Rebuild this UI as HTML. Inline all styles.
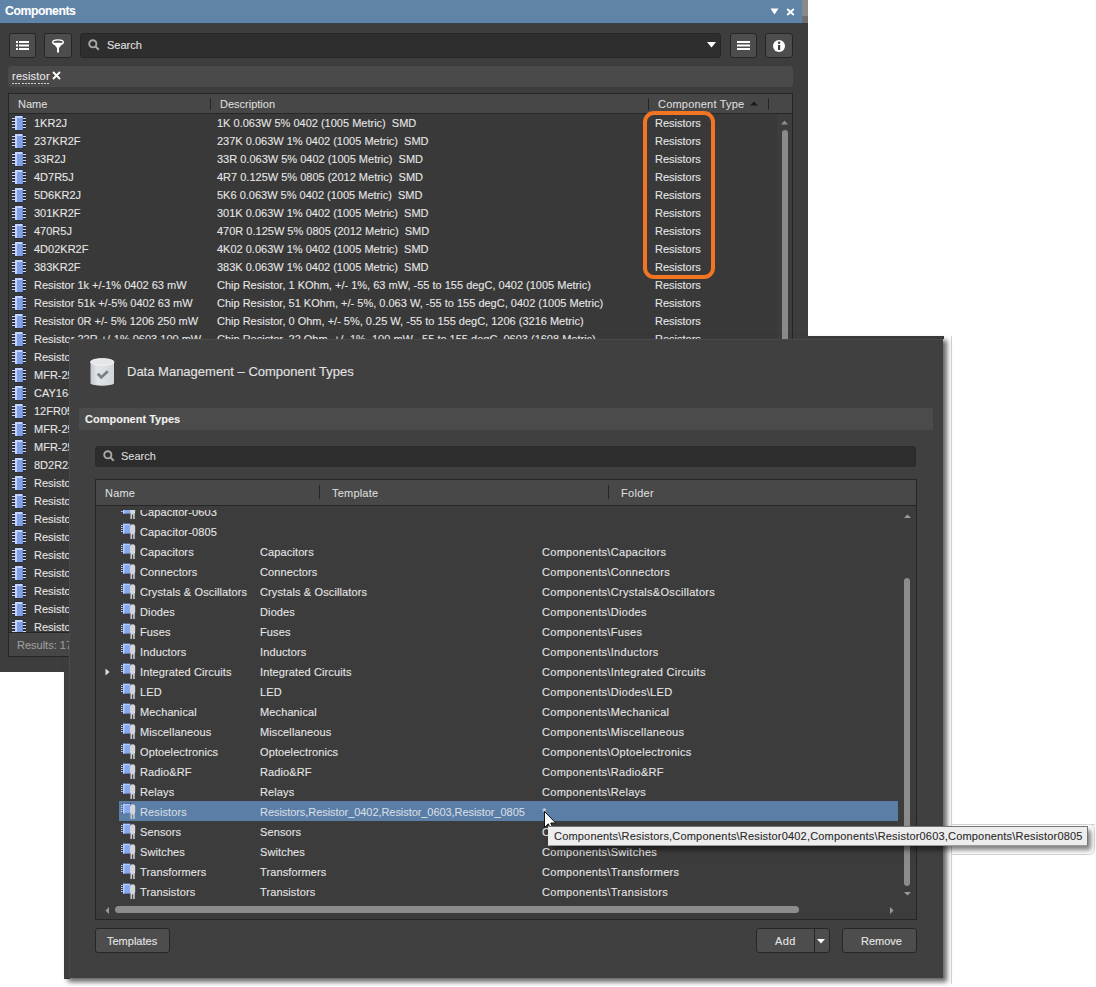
<!DOCTYPE html>
<html><head><meta charset="utf-8"><style>
*{box-sizing:border-box;margin:0;padding:0}
html,body{width:1096px;height:987px;overflow:hidden;background:#fff;position:relative;font-family:"Liberation Sans",sans-serif;color:#e8e8e8;font-size:11px}
.a{position:absolute}
.t{position:absolute;white-space:pre;line-height:14px;-webkit-text-stroke:0.1px currentColor}
.btn{position:absolute;background:#4d4d4d;border:1px solid #262626;border-radius:3px}
svg{position:absolute;overflow:visible}
.clip{position:absolute;overflow:hidden}
</style></head><body>
<div class="a" style="left:0px;top:0px;width:808px;height:672px;background:#3d3d3d;"></div>
<div class="a" style="left:0px;top:0px;width:802px;height:23px;background:#6084a8;"></div>
<div class="a" style="left:0px;top:23px;width:802px;height:1px;background:#39404a;"></div>
<div class="a" style="left:802px;top:0px;width:6px;height:16px;background:#8a8a8a;"></div>
<div class="a" style="left:802px;top:16px;width:6px;height:7px;background:#6f6f6f;"></div>
<div class="t" style="left:5px;top:3.77px;font-size:12.2px;color:#ffffff;font-weight:700;letter-spacing:-0.4px;">Components</div>
<svg style="left:770px;top:8px" width="9" height="7" viewBox="0 0 9 7"><path d="M0.5 0.5H8.5L4.5 6.5Z" fill="#fff"/></svg><svg style="left:786px;top:8px" width="9" height="8" viewBox="0 0 9 8"><path d="M1.2 1 L7.8 7 M7.8 1 L1.2 7" stroke="#fff" stroke-width="1.8"/></svg><div class="btn" style="left:9px;top:33px;width:27px;height:25px"></div><svg style="left:16px;top:41px" width="13" height="9" viewBox="0 0 13 9"><g fill="#fff"><rect x="0" y="0" width="2" height="2"/><rect x="3" y="0" width="10" height="2"/><rect x="0" y="3.5" width="2" height="2"/><rect x="3" y="3.5" width="10" height="2"/><rect x="0" y="7" width="2" height="2"/><rect x="3" y="7" width="10" height="2"/></g></svg><div class="btn" style="left:44px;top:33px;width:28px;height:25px"></div><svg style="left:51px;top:39px" width="14" height="14" viewBox="0 0 14 14"><ellipse cx="7" cy="3.2" rx="5.3" ry="2.3" fill="none" stroke="#fff" stroke-width="1.4"/><path d="M1.8 3.8 L6 9 L8 9 L12.2 3.8 Z" fill="#fff"/><rect x="6" y="8" width="2" height="5.5" fill="#fff"/></svg><div class="a" style="left:80px;top:33px;width:641px;height:25px;background:#2e2e2e;border:1px solid #262626;border-radius:3px"></div><svg style="left:88px;top:39px" width="12" height="12" viewBox="0 0 12 12"><circle cx="4.8" cy="4.8" r="3.6" fill="none" stroke="#a8a8a8" stroke-width="1.9"/><path d="M7.4 7.4 L10.8 10.8" stroke="#a8a8a8" stroke-width="2"/></svg><div class="t" style="left:107px;top:38.19px;font-size:11px;color:#e0e0e0;font-weight:400;letter-spacing:0px;">Search</div>
<svg style="left:707px;top:42px" width="9" height="6" viewBox="0 0 9 6"><path d="M0 0H9L4.5 5.5Z" fill="#fff"/></svg><div class="btn" style="left:730px;top:33px;width:27px;height:25px"></div><svg style="left:737px;top:41px" width="13" height="9" viewBox="0 0 13 9"><g fill="#fff"><rect x="0" y="0" width="13" height="2"/><rect x="0" y="3.5" width="13" height="2"/><rect x="0" y="7" width="13" height="2"/></g></svg><div class="btn" style="left:765px;top:33px;width:28px;height:25px"></div><svg style="left:772px;top:39px" width="14" height="14" viewBox="0 0 14 14"><circle cx="7" cy="7" r="6" fill="#fff"/><rect x="6" y="6" width="2.2" height="5" fill="#3d3d3d"/><circle cx="7.1" cy="3.8" r="1.2" fill="#3d3d3d"/></svg><div class="a" style="left:8px;top:66px;width:785px;height:21px;background:#4a4a4a;border-radius:4px"></div>
<div class="t" style="left:12px;top:69.19px;font-size:11px;color:#e8e8e8;font-weight:400;letter-spacing:0.22px;">resistor</div>
<div class="a" style="left:12px;top:83px;width:38px;height:1px;background:repeating-linear-gradient(to right,#d0d0d0 0,#d0d0d0 2px,transparent 2px,transparent 3.2px);"></div>
<svg style="left:52px;top:71px" width="9" height="9" viewBox="0 0 9 9"><path d="M1 1 L8 8 M8 1 L1 8" stroke="#fff" stroke-width="1.8"/></svg><div class="a" style="left:8px;top:93px;width:785px;height:564px;background:#393939;border:1px solid #262626"></div>
<div class="a" style="left:9px;top:94px;width:783px;height:19px;background:#474747;"></div>
<div class="a" style="left:9px;top:113px;width:783px;height:1px;background:#262626;"></div>
<div class="a" style="left:210px;top:98px;width:1px;height:12px;background:#262626;"></div>
<div class="a" style="left:648px;top:98px;width:1px;height:12px;background:#262626;"></div>
<div class="a" style="left:768px;top:98px;width:1px;height:12px;background:#262626;"></div>
<div class="t" style="left:18px;top:97.19px;font-size:11px;color:#dcdcdc;font-weight:400;letter-spacing:0px;">Name</div>
<div class="t" style="left:220px;top:97.19px;font-size:11px;color:#dcdcdc;font-weight:400;letter-spacing:0px;">Description</div>
<div class="t" style="left:658px;top:97.19px;font-size:11px;color:#dcdcdc;font-weight:400;letter-spacing:0.2px;">Component Type</div>
<svg style="left:750px;top:100.5px" width="8" height="5" viewBox="0 0 8 5"><path d="M0 4.5H8L4 0.5Z" fill="#1c1c1c"/></svg><div class="clip" style="left:9px;top:114px;width:770px;height:518px"><svg style="left:3px;top:2px" width="14" height="14" viewBox="0 0 14 14"><rect x="0.5" y="1" width="13" height="12" fill="#1d2640" opacity="0.55"/><rect x="2.5" y="-0.5" width="9" height="15" fill="#1d2a4a" opacity="0.8"/><g fill="#d6d9e2"><rect x="0" y="2" width="3" height="1"/><rect x="0" y="5" width="3" height="1"/><rect x="0" y="8" width="3" height="1"/><rect x="0" y="11" width="3" height="1"/><rect x="11" y="2" width="3" height="1"/><rect x="11" y="5" width="3" height="1"/><rect x="11" y="8" width="3" height="1"/><rect x="11" y="11" width="3" height="1"/></g><rect x="3" y="0" width="8" height="14" fill="#7f9fe6"/><rect x="3" y="0" width="2" height="14" fill="#c2d6ff"/><rect x="3" y="0" width="8" height="2" fill="#c2d6ff"/><rect x="10.3" y="0" width="0.7" height="14" fill="#6a88d0"/></svg><div class="t" style="left:25px;top:2.19px;font-size:11px;color:#e6e6e6;font-weight:400;letter-spacing:0px;">1KR2J</div>
<div class="t" style="left:208px;top:2.19px;font-size:11px;color:#e6e6e6;font-weight:400;letter-spacing:0px;">1K 0.063W 5% 0402 (1005 Metric)  SMD</div>
<div class="t" style="left:646px;top:2.19px;font-size:11px;color:#e6e6e6;font-weight:400;letter-spacing:0px;">Resistors</div>
<svg style="left:3px;top:20px" width="14" height="14" viewBox="0 0 14 14"><rect x="0.5" y="1" width="13" height="12" fill="#1d2640" opacity="0.55"/><rect x="2.5" y="-0.5" width="9" height="15" fill="#1d2a4a" opacity="0.8"/><g fill="#d6d9e2"><rect x="0" y="2" width="3" height="1"/><rect x="0" y="5" width="3" height="1"/><rect x="0" y="8" width="3" height="1"/><rect x="0" y="11" width="3" height="1"/><rect x="11" y="2" width="3" height="1"/><rect x="11" y="5" width="3" height="1"/><rect x="11" y="8" width="3" height="1"/><rect x="11" y="11" width="3" height="1"/></g><rect x="3" y="0" width="8" height="14" fill="#7f9fe6"/><rect x="3" y="0" width="2" height="14" fill="#c2d6ff"/><rect x="3" y="0" width="8" height="2" fill="#c2d6ff"/><rect x="10.3" y="0" width="0.7" height="14" fill="#6a88d0"/></svg><div class="t" style="left:25px;top:20.19px;font-size:11px;color:#e6e6e6;font-weight:400;letter-spacing:0px;">237KR2F</div>
<div class="t" style="left:208px;top:20.19px;font-size:11px;color:#e6e6e6;font-weight:400;letter-spacing:0px;">237K 0.063W 1% 0402 (1005 Metric)  SMD</div>
<div class="t" style="left:646px;top:20.19px;font-size:11px;color:#e6e6e6;font-weight:400;letter-spacing:0px;">Resistors</div>
<svg style="left:3px;top:38px" width="14" height="14" viewBox="0 0 14 14"><rect x="0.5" y="1" width="13" height="12" fill="#1d2640" opacity="0.55"/><rect x="2.5" y="-0.5" width="9" height="15" fill="#1d2a4a" opacity="0.8"/><g fill="#d6d9e2"><rect x="0" y="2" width="3" height="1"/><rect x="0" y="5" width="3" height="1"/><rect x="0" y="8" width="3" height="1"/><rect x="0" y="11" width="3" height="1"/><rect x="11" y="2" width="3" height="1"/><rect x="11" y="5" width="3" height="1"/><rect x="11" y="8" width="3" height="1"/><rect x="11" y="11" width="3" height="1"/></g><rect x="3" y="0" width="8" height="14" fill="#7f9fe6"/><rect x="3" y="0" width="2" height="14" fill="#c2d6ff"/><rect x="3" y="0" width="8" height="2" fill="#c2d6ff"/><rect x="10.3" y="0" width="0.7" height="14" fill="#6a88d0"/></svg><div class="t" style="left:25px;top:38.19px;font-size:11px;color:#e6e6e6;font-weight:400;letter-spacing:0px;">33R2J</div>
<div class="t" style="left:208px;top:38.19px;font-size:11px;color:#e6e6e6;font-weight:400;letter-spacing:0px;">33R 0.063W 5% 0402 (1005 Metric)  SMD</div>
<div class="t" style="left:646px;top:38.19px;font-size:11px;color:#e6e6e6;font-weight:400;letter-spacing:0px;">Resistors</div>
<svg style="left:3px;top:56px" width="14" height="14" viewBox="0 0 14 14"><rect x="0.5" y="1" width="13" height="12" fill="#1d2640" opacity="0.55"/><rect x="2.5" y="-0.5" width="9" height="15" fill="#1d2a4a" opacity="0.8"/><g fill="#d6d9e2"><rect x="0" y="2" width="3" height="1"/><rect x="0" y="5" width="3" height="1"/><rect x="0" y="8" width="3" height="1"/><rect x="0" y="11" width="3" height="1"/><rect x="11" y="2" width="3" height="1"/><rect x="11" y="5" width="3" height="1"/><rect x="11" y="8" width="3" height="1"/><rect x="11" y="11" width="3" height="1"/></g><rect x="3" y="0" width="8" height="14" fill="#7f9fe6"/><rect x="3" y="0" width="2" height="14" fill="#c2d6ff"/><rect x="3" y="0" width="8" height="2" fill="#c2d6ff"/><rect x="10.3" y="0" width="0.7" height="14" fill="#6a88d0"/></svg><div class="t" style="left:25px;top:56.19px;font-size:11px;color:#e6e6e6;font-weight:400;letter-spacing:0px;">4D7R5J</div>
<div class="t" style="left:208px;top:56.19px;font-size:11px;color:#e6e6e6;font-weight:400;letter-spacing:0px;">4R7 0.125W 5% 0805 (2012 Metric)  SMD</div>
<div class="t" style="left:646px;top:56.19px;font-size:11px;color:#e6e6e6;font-weight:400;letter-spacing:0px;">Resistors</div>
<svg style="left:3px;top:74px" width="14" height="14" viewBox="0 0 14 14"><rect x="0.5" y="1" width="13" height="12" fill="#1d2640" opacity="0.55"/><rect x="2.5" y="-0.5" width="9" height="15" fill="#1d2a4a" opacity="0.8"/><g fill="#d6d9e2"><rect x="0" y="2" width="3" height="1"/><rect x="0" y="5" width="3" height="1"/><rect x="0" y="8" width="3" height="1"/><rect x="0" y="11" width="3" height="1"/><rect x="11" y="2" width="3" height="1"/><rect x="11" y="5" width="3" height="1"/><rect x="11" y="8" width="3" height="1"/><rect x="11" y="11" width="3" height="1"/></g><rect x="3" y="0" width="8" height="14" fill="#7f9fe6"/><rect x="3" y="0" width="2" height="14" fill="#c2d6ff"/><rect x="3" y="0" width="8" height="2" fill="#c2d6ff"/><rect x="10.3" y="0" width="0.7" height="14" fill="#6a88d0"/></svg><div class="t" style="left:25px;top:74.19px;font-size:11px;color:#e6e6e6;font-weight:400;letter-spacing:0px;">5D6KR2J</div>
<div class="t" style="left:208px;top:74.19px;font-size:11px;color:#e6e6e6;font-weight:400;letter-spacing:0px;">5K6 0.063W 5% 0402 (1005 Metric)  SMD</div>
<div class="t" style="left:646px;top:74.19px;font-size:11px;color:#e6e6e6;font-weight:400;letter-spacing:0px;">Resistors</div>
<svg style="left:3px;top:92px" width="14" height="14" viewBox="0 0 14 14"><rect x="0.5" y="1" width="13" height="12" fill="#1d2640" opacity="0.55"/><rect x="2.5" y="-0.5" width="9" height="15" fill="#1d2a4a" opacity="0.8"/><g fill="#d6d9e2"><rect x="0" y="2" width="3" height="1"/><rect x="0" y="5" width="3" height="1"/><rect x="0" y="8" width="3" height="1"/><rect x="0" y="11" width="3" height="1"/><rect x="11" y="2" width="3" height="1"/><rect x="11" y="5" width="3" height="1"/><rect x="11" y="8" width="3" height="1"/><rect x="11" y="11" width="3" height="1"/></g><rect x="3" y="0" width="8" height="14" fill="#7f9fe6"/><rect x="3" y="0" width="2" height="14" fill="#c2d6ff"/><rect x="3" y="0" width="8" height="2" fill="#c2d6ff"/><rect x="10.3" y="0" width="0.7" height="14" fill="#6a88d0"/></svg><div class="t" style="left:25px;top:92.19px;font-size:11px;color:#e6e6e6;font-weight:400;letter-spacing:0px;">301KR2F</div>
<div class="t" style="left:208px;top:92.19px;font-size:11px;color:#e6e6e6;font-weight:400;letter-spacing:0px;">301K 0.063W 1% 0402 (1005 Metric)  SMD</div>
<div class="t" style="left:646px;top:92.19px;font-size:11px;color:#e6e6e6;font-weight:400;letter-spacing:0px;">Resistors</div>
<svg style="left:3px;top:110px" width="14" height="14" viewBox="0 0 14 14"><rect x="0.5" y="1" width="13" height="12" fill="#1d2640" opacity="0.55"/><rect x="2.5" y="-0.5" width="9" height="15" fill="#1d2a4a" opacity="0.8"/><g fill="#d6d9e2"><rect x="0" y="2" width="3" height="1"/><rect x="0" y="5" width="3" height="1"/><rect x="0" y="8" width="3" height="1"/><rect x="0" y="11" width="3" height="1"/><rect x="11" y="2" width="3" height="1"/><rect x="11" y="5" width="3" height="1"/><rect x="11" y="8" width="3" height="1"/><rect x="11" y="11" width="3" height="1"/></g><rect x="3" y="0" width="8" height="14" fill="#7f9fe6"/><rect x="3" y="0" width="2" height="14" fill="#c2d6ff"/><rect x="3" y="0" width="8" height="2" fill="#c2d6ff"/><rect x="10.3" y="0" width="0.7" height="14" fill="#6a88d0"/></svg><div class="t" style="left:25px;top:110.19px;font-size:11px;color:#e6e6e6;font-weight:400;letter-spacing:0px;">470R5J</div>
<div class="t" style="left:208px;top:110.19px;font-size:11px;color:#e6e6e6;font-weight:400;letter-spacing:0px;">470R 0.125W 5% 0805 (2012 Metric)  SMD</div>
<div class="t" style="left:646px;top:110.19px;font-size:11px;color:#e6e6e6;font-weight:400;letter-spacing:0px;">Resistors</div>
<svg style="left:3px;top:128px" width="14" height="14" viewBox="0 0 14 14"><rect x="0.5" y="1" width="13" height="12" fill="#1d2640" opacity="0.55"/><rect x="2.5" y="-0.5" width="9" height="15" fill="#1d2a4a" opacity="0.8"/><g fill="#d6d9e2"><rect x="0" y="2" width="3" height="1"/><rect x="0" y="5" width="3" height="1"/><rect x="0" y="8" width="3" height="1"/><rect x="0" y="11" width="3" height="1"/><rect x="11" y="2" width="3" height="1"/><rect x="11" y="5" width="3" height="1"/><rect x="11" y="8" width="3" height="1"/><rect x="11" y="11" width="3" height="1"/></g><rect x="3" y="0" width="8" height="14" fill="#7f9fe6"/><rect x="3" y="0" width="2" height="14" fill="#c2d6ff"/><rect x="3" y="0" width="8" height="2" fill="#c2d6ff"/><rect x="10.3" y="0" width="0.7" height="14" fill="#6a88d0"/></svg><div class="t" style="left:25px;top:128.19px;font-size:11px;color:#e6e6e6;font-weight:400;letter-spacing:0px;">4D02KR2F</div>
<div class="t" style="left:208px;top:128.19px;font-size:11px;color:#e6e6e6;font-weight:400;letter-spacing:0px;">4K02 0.063W 1% 0402 (1005 Metric)  SMD</div>
<div class="t" style="left:646px;top:128.19px;font-size:11px;color:#e6e6e6;font-weight:400;letter-spacing:0px;">Resistors</div>
<svg style="left:3px;top:146px" width="14" height="14" viewBox="0 0 14 14"><rect x="0.5" y="1" width="13" height="12" fill="#1d2640" opacity="0.55"/><rect x="2.5" y="-0.5" width="9" height="15" fill="#1d2a4a" opacity="0.8"/><g fill="#d6d9e2"><rect x="0" y="2" width="3" height="1"/><rect x="0" y="5" width="3" height="1"/><rect x="0" y="8" width="3" height="1"/><rect x="0" y="11" width="3" height="1"/><rect x="11" y="2" width="3" height="1"/><rect x="11" y="5" width="3" height="1"/><rect x="11" y="8" width="3" height="1"/><rect x="11" y="11" width="3" height="1"/></g><rect x="3" y="0" width="8" height="14" fill="#7f9fe6"/><rect x="3" y="0" width="2" height="14" fill="#c2d6ff"/><rect x="3" y="0" width="8" height="2" fill="#c2d6ff"/><rect x="10.3" y="0" width="0.7" height="14" fill="#6a88d0"/></svg><div class="t" style="left:25px;top:146.19px;font-size:11px;color:#e6e6e6;font-weight:400;letter-spacing:0px;">383KR2F</div>
<div class="t" style="left:208px;top:146.19px;font-size:11px;color:#e6e6e6;font-weight:400;letter-spacing:0px;">383K 0.063W 1% 0402 (1005 Metric)  SMD</div>
<div class="t" style="left:646px;top:146.19px;font-size:11px;color:#e6e6e6;font-weight:400;letter-spacing:0px;">Resistors</div>
<svg style="left:3px;top:164px" width="14" height="14" viewBox="0 0 14 14"><rect x="0.5" y="1" width="13" height="12" fill="#1d2640" opacity="0.55"/><rect x="2.5" y="-0.5" width="9" height="15" fill="#1d2a4a" opacity="0.8"/><g fill="#d6d9e2"><rect x="0" y="2" width="3" height="1"/><rect x="0" y="5" width="3" height="1"/><rect x="0" y="8" width="3" height="1"/><rect x="0" y="11" width="3" height="1"/><rect x="11" y="2" width="3" height="1"/><rect x="11" y="5" width="3" height="1"/><rect x="11" y="8" width="3" height="1"/><rect x="11" y="11" width="3" height="1"/></g><rect x="3" y="0" width="8" height="14" fill="#7f9fe6"/><rect x="3" y="0" width="2" height="14" fill="#c2d6ff"/><rect x="3" y="0" width="8" height="2" fill="#c2d6ff"/><rect x="10.3" y="0" width="0.7" height="14" fill="#6a88d0"/></svg><div class="t" style="left:25px;top:164.19px;font-size:11px;color:#e6e6e6;font-weight:400;letter-spacing:0px;">Resistor 1k +/-1% 0402 63 mW</div>
<div class="t" style="left:208px;top:164.19px;font-size:11px;color:#e6e6e6;font-weight:400;letter-spacing:0px;">Chip Resistor, 1 KOhm, +/- 1%, 63 mW, -55 to 155 degC, 0402 (1005 Metric)</div>
<div class="t" style="left:646px;top:164.19px;font-size:11px;color:#e6e6e6;font-weight:400;letter-spacing:0px;">Resistors</div>
<svg style="left:3px;top:182px" width="14" height="14" viewBox="0 0 14 14"><rect x="0.5" y="1" width="13" height="12" fill="#1d2640" opacity="0.55"/><rect x="2.5" y="-0.5" width="9" height="15" fill="#1d2a4a" opacity="0.8"/><g fill="#d6d9e2"><rect x="0" y="2" width="3" height="1"/><rect x="0" y="5" width="3" height="1"/><rect x="0" y="8" width="3" height="1"/><rect x="0" y="11" width="3" height="1"/><rect x="11" y="2" width="3" height="1"/><rect x="11" y="5" width="3" height="1"/><rect x="11" y="8" width="3" height="1"/><rect x="11" y="11" width="3" height="1"/></g><rect x="3" y="0" width="8" height="14" fill="#7f9fe6"/><rect x="3" y="0" width="2" height="14" fill="#c2d6ff"/><rect x="3" y="0" width="8" height="2" fill="#c2d6ff"/><rect x="10.3" y="0" width="0.7" height="14" fill="#6a88d0"/></svg><div class="t" style="left:25px;top:182.19px;font-size:11px;color:#e6e6e6;font-weight:400;letter-spacing:0px;">Resistor 51k +/-5% 0402 63 mW</div>
<div class="t" style="left:208px;top:182.19px;font-size:11px;color:#e6e6e6;font-weight:400;letter-spacing:0px;">Chip Resistor, 51 KOhm, +/- 5%, 0.063 W, -55 to 155 degC, 0402 (1005 Metric)</div>
<div class="t" style="left:646px;top:182.19px;font-size:11px;color:#e6e6e6;font-weight:400;letter-spacing:0px;">Resistors</div>
<svg style="left:3px;top:200px" width="14" height="14" viewBox="0 0 14 14"><rect x="0.5" y="1" width="13" height="12" fill="#1d2640" opacity="0.55"/><rect x="2.5" y="-0.5" width="9" height="15" fill="#1d2a4a" opacity="0.8"/><g fill="#d6d9e2"><rect x="0" y="2" width="3" height="1"/><rect x="0" y="5" width="3" height="1"/><rect x="0" y="8" width="3" height="1"/><rect x="0" y="11" width="3" height="1"/><rect x="11" y="2" width="3" height="1"/><rect x="11" y="5" width="3" height="1"/><rect x="11" y="8" width="3" height="1"/><rect x="11" y="11" width="3" height="1"/></g><rect x="3" y="0" width="8" height="14" fill="#7f9fe6"/><rect x="3" y="0" width="2" height="14" fill="#c2d6ff"/><rect x="3" y="0" width="8" height="2" fill="#c2d6ff"/><rect x="10.3" y="0" width="0.7" height="14" fill="#6a88d0"/></svg><div class="t" style="left:25px;top:200.19px;font-size:11px;color:#e6e6e6;font-weight:400;letter-spacing:0px;">Resistor 0R +/- 5% 1206 250 mW</div>
<div class="t" style="left:208px;top:200.19px;font-size:11px;color:#e6e6e6;font-weight:400;letter-spacing:0px;">Chip Resistor, 0 Ohm, +/- 5%, 0.25 W, -55 to 155 degC, 1206 (3216 Metric)</div>
<div class="t" style="left:646px;top:200.19px;font-size:11px;color:#e6e6e6;font-weight:400;letter-spacing:0px;">Resistors</div>
<svg style="left:3px;top:218px" width="14" height="14" viewBox="0 0 14 14"><rect x="0.5" y="1" width="13" height="12" fill="#1d2640" opacity="0.55"/><rect x="2.5" y="-0.5" width="9" height="15" fill="#1d2a4a" opacity="0.8"/><g fill="#d6d9e2"><rect x="0" y="2" width="3" height="1"/><rect x="0" y="5" width="3" height="1"/><rect x="0" y="8" width="3" height="1"/><rect x="0" y="11" width="3" height="1"/><rect x="11" y="2" width="3" height="1"/><rect x="11" y="5" width="3" height="1"/><rect x="11" y="8" width="3" height="1"/><rect x="11" y="11" width="3" height="1"/></g><rect x="3" y="0" width="8" height="14" fill="#7f9fe6"/><rect x="3" y="0" width="2" height="14" fill="#c2d6ff"/><rect x="3" y="0" width="8" height="2" fill="#c2d6ff"/><rect x="10.3" y="0" width="0.7" height="14" fill="#6a88d0"/></svg><div class="t" style="left:25px;top:218.19px;font-size:11px;color:#e6e6e6;font-weight:400;letter-spacing:0px;">Resistor 22R +/-1% 0603 100 mW</div>
<div class="t" style="left:208px;top:218.19px;font-size:11px;color:#e6e6e6;font-weight:400;letter-spacing:0px;">Chip Resistor, 22 Ohm, +/- 1%, 100 mW, -55 to 155 degC, 0603 (1608 Metric)</div>
<div class="t" style="left:646px;top:218.19px;font-size:11px;color:#e6e6e6;font-weight:400;letter-spacing:0px;">Resistors</div>
<svg style="left:3px;top:236px" width="14" height="14" viewBox="0 0 14 14"><rect x="0.5" y="1" width="13" height="12" fill="#1d2640" opacity="0.55"/><rect x="2.5" y="-0.5" width="9" height="15" fill="#1d2a4a" opacity="0.8"/><g fill="#d6d9e2"><rect x="0" y="2" width="3" height="1"/><rect x="0" y="5" width="3" height="1"/><rect x="0" y="8" width="3" height="1"/><rect x="0" y="11" width="3" height="1"/><rect x="11" y="2" width="3" height="1"/><rect x="11" y="5" width="3" height="1"/><rect x="11" y="8" width="3" height="1"/><rect x="11" y="11" width="3" height="1"/></g><rect x="3" y="0" width="8" height="14" fill="#7f9fe6"/><rect x="3" y="0" width="2" height="14" fill="#c2d6ff"/><rect x="3" y="0" width="8" height="2" fill="#c2d6ff"/><rect x="10.3" y="0" width="0.7" height="14" fill="#6a88d0"/></svg><div class="t" style="left:25px;top:236.19px;font-size:11px;color:#e6e6e6;font-weight:400;letter-spacing:0px;">Resistor</div>
<div class="t" style="left:208px;top:236.19px;font-size:11px;color:#e6e6e6;font-weight:400;letter-spacing:0px;">Chip Resistor</div>
<div class="t" style="left:646px;top:236.19px;font-size:11px;color:#e6e6e6;font-weight:400;letter-spacing:0px;">Resistors</div>
<svg style="left:3px;top:254px" width="14" height="14" viewBox="0 0 14 14"><rect x="0.5" y="1" width="13" height="12" fill="#1d2640" opacity="0.55"/><rect x="2.5" y="-0.5" width="9" height="15" fill="#1d2a4a" opacity="0.8"/><g fill="#d6d9e2"><rect x="0" y="2" width="3" height="1"/><rect x="0" y="5" width="3" height="1"/><rect x="0" y="8" width="3" height="1"/><rect x="0" y="11" width="3" height="1"/><rect x="11" y="2" width="3" height="1"/><rect x="11" y="5" width="3" height="1"/><rect x="11" y="8" width="3" height="1"/><rect x="11" y="11" width="3" height="1"/></g><rect x="3" y="0" width="8" height="14" fill="#7f9fe6"/><rect x="3" y="0" width="2" height="14" fill="#c2d6ff"/><rect x="3" y="0" width="8" height="2" fill="#c2d6ff"/><rect x="10.3" y="0" width="0.7" height="14" fill="#6a88d0"/></svg><div class="t" style="left:25px;top:254.19px;font-size:11px;color:#e6e6e6;font-weight:400;letter-spacing:0px;">MFR-25FBF52</div>
<div class="t" style="left:208px;top:254.19px;font-size:11px;color:#e6e6e6;font-weight:400;letter-spacing:0px;">Resistor</div>
<div class="t" style="left:646px;top:254.19px;font-size:11px;color:#e6e6e6;font-weight:400;letter-spacing:0px;">Resistors</div>
<svg style="left:3px;top:272px" width="14" height="14" viewBox="0 0 14 14"><rect x="0.5" y="1" width="13" height="12" fill="#1d2640" opacity="0.55"/><rect x="2.5" y="-0.5" width="9" height="15" fill="#1d2a4a" opacity="0.8"/><g fill="#d6d9e2"><rect x="0" y="2" width="3" height="1"/><rect x="0" y="5" width="3" height="1"/><rect x="0" y="8" width="3" height="1"/><rect x="0" y="11" width="3" height="1"/><rect x="11" y="2" width="3" height="1"/><rect x="11" y="5" width="3" height="1"/><rect x="11" y="8" width="3" height="1"/><rect x="11" y="11" width="3" height="1"/></g><rect x="3" y="0" width="8" height="14" fill="#7f9fe6"/><rect x="3" y="0" width="2" height="14" fill="#c2d6ff"/><rect x="3" y="0" width="8" height="2" fill="#c2d6ff"/><rect x="10.3" y="0" width="0.7" height="14" fill="#6a88d0"/></svg><div class="t" style="left:25px;top:272.19px;font-size:11px;color:#e6e6e6;font-weight:400;letter-spacing:0px;">CAY16-103J4LF</div>
<div class="t" style="left:208px;top:272.19px;font-size:11px;color:#e6e6e6;font-weight:400;letter-spacing:0px;">Resistor</div>
<div class="t" style="left:646px;top:272.19px;font-size:11px;color:#e6e6e6;font-weight:400;letter-spacing:0px;">Resistors</div>
<svg style="left:3px;top:290px" width="14" height="14" viewBox="0 0 14 14"><rect x="0.5" y="1" width="13" height="12" fill="#1d2640" opacity="0.55"/><rect x="2.5" y="-0.5" width="9" height="15" fill="#1d2a4a" opacity="0.8"/><g fill="#d6d9e2"><rect x="0" y="2" width="3" height="1"/><rect x="0" y="5" width="3" height="1"/><rect x="0" y="8" width="3" height="1"/><rect x="0" y="11" width="3" height="1"/><rect x="11" y="2" width="3" height="1"/><rect x="11" y="5" width="3" height="1"/><rect x="11" y="8" width="3" height="1"/><rect x="11" y="11" width="3" height="1"/></g><rect x="3" y="0" width="8" height="14" fill="#7f9fe6"/><rect x="3" y="0" width="2" height="14" fill="#c2d6ff"/><rect x="3" y="0" width="8" height="2" fill="#c2d6ff"/><rect x="10.3" y="0" width="0.7" height="14" fill="#6a88d0"/></svg><div class="t" style="left:25px;top:290.19px;font-size:11px;color:#e6e6e6;font-weight:400;letter-spacing:0px;">12FR050E</div>
<div class="t" style="left:208px;top:290.19px;font-size:11px;color:#e6e6e6;font-weight:400;letter-spacing:0px;">Resistor</div>
<div class="t" style="left:646px;top:290.19px;font-size:11px;color:#e6e6e6;font-weight:400;letter-spacing:0px;">Resistors</div>
<svg style="left:3px;top:308px" width="14" height="14" viewBox="0 0 14 14"><rect x="0.5" y="1" width="13" height="12" fill="#1d2640" opacity="0.55"/><rect x="2.5" y="-0.5" width="9" height="15" fill="#1d2a4a" opacity="0.8"/><g fill="#d6d9e2"><rect x="0" y="2" width="3" height="1"/><rect x="0" y="5" width="3" height="1"/><rect x="0" y="8" width="3" height="1"/><rect x="0" y="11" width="3" height="1"/><rect x="11" y="2" width="3" height="1"/><rect x="11" y="5" width="3" height="1"/><rect x="11" y="8" width="3" height="1"/><rect x="11" y="11" width="3" height="1"/></g><rect x="3" y="0" width="8" height="14" fill="#7f9fe6"/><rect x="3" y="0" width="2" height="14" fill="#c2d6ff"/><rect x="3" y="0" width="8" height="2" fill="#c2d6ff"/><rect x="10.3" y="0" width="0.7" height="14" fill="#6a88d0"/></svg><div class="t" style="left:25px;top:308.19px;font-size:11px;color:#e6e6e6;font-weight:400;letter-spacing:0px;">MFR-25FBF52</div>
<div class="t" style="left:208px;top:308.19px;font-size:11px;color:#e6e6e6;font-weight:400;letter-spacing:0px;">Resistor</div>
<div class="t" style="left:646px;top:308.19px;font-size:11px;color:#e6e6e6;font-weight:400;letter-spacing:0px;">Resistors</div>
<svg style="left:3px;top:326px" width="14" height="14" viewBox="0 0 14 14"><rect x="0.5" y="1" width="13" height="12" fill="#1d2640" opacity="0.55"/><rect x="2.5" y="-0.5" width="9" height="15" fill="#1d2a4a" opacity="0.8"/><g fill="#d6d9e2"><rect x="0" y="2" width="3" height="1"/><rect x="0" y="5" width="3" height="1"/><rect x="0" y="8" width="3" height="1"/><rect x="0" y="11" width="3" height="1"/><rect x="11" y="2" width="3" height="1"/><rect x="11" y="5" width="3" height="1"/><rect x="11" y="8" width="3" height="1"/><rect x="11" y="11" width="3" height="1"/></g><rect x="3" y="0" width="8" height="14" fill="#7f9fe6"/><rect x="3" y="0" width="2" height="14" fill="#c2d6ff"/><rect x="3" y="0" width="8" height="2" fill="#c2d6ff"/><rect x="10.3" y="0" width="0.7" height="14" fill="#6a88d0"/></svg><div class="t" style="left:25px;top:326.19px;font-size:11px;color:#e6e6e6;font-weight:400;letter-spacing:0px;">MFR-25FBF52</div>
<div class="t" style="left:208px;top:326.19px;font-size:11px;color:#e6e6e6;font-weight:400;letter-spacing:0px;">Resistor</div>
<div class="t" style="left:646px;top:326.19px;font-size:11px;color:#e6e6e6;font-weight:400;letter-spacing:0px;">Resistors</div>
<svg style="left:3px;top:344px" width="14" height="14" viewBox="0 0 14 14"><rect x="0.5" y="1" width="13" height="12" fill="#1d2640" opacity="0.55"/><rect x="2.5" y="-0.5" width="9" height="15" fill="#1d2a4a" opacity="0.8"/><g fill="#d6d9e2"><rect x="0" y="2" width="3" height="1"/><rect x="0" y="5" width="3" height="1"/><rect x="0" y="8" width="3" height="1"/><rect x="0" y="11" width="3" height="1"/><rect x="11" y="2" width="3" height="1"/><rect x="11" y="5" width="3" height="1"/><rect x="11" y="8" width="3" height="1"/><rect x="11" y="11" width="3" height="1"/></g><rect x="3" y="0" width="8" height="14" fill="#7f9fe6"/><rect x="3" y="0" width="2" height="14" fill="#c2d6ff"/><rect x="3" y="0" width="8" height="2" fill="#c2d6ff"/><rect x="10.3" y="0" width="0.7" height="14" fill="#6a88d0"/></svg><div class="t" style="left:25px;top:344.19px;font-size:11px;color:#e6e6e6;font-weight:400;letter-spacing:0px;">8D2R2J</div>
<div class="t" style="left:208px;top:344.19px;font-size:11px;color:#e6e6e6;font-weight:400;letter-spacing:0px;">Resistor</div>
<div class="t" style="left:646px;top:344.19px;font-size:11px;color:#e6e6e6;font-weight:400;letter-spacing:0px;">Resistors</div>
<svg style="left:3px;top:362px" width="14" height="14" viewBox="0 0 14 14"><rect x="0.5" y="1" width="13" height="12" fill="#1d2640" opacity="0.55"/><rect x="2.5" y="-0.5" width="9" height="15" fill="#1d2a4a" opacity="0.8"/><g fill="#d6d9e2"><rect x="0" y="2" width="3" height="1"/><rect x="0" y="5" width="3" height="1"/><rect x="0" y="8" width="3" height="1"/><rect x="0" y="11" width="3" height="1"/><rect x="11" y="2" width="3" height="1"/><rect x="11" y="5" width="3" height="1"/><rect x="11" y="8" width="3" height="1"/><rect x="11" y="11" width="3" height="1"/></g><rect x="3" y="0" width="8" height="14" fill="#7f9fe6"/><rect x="3" y="0" width="2" height="14" fill="#c2d6ff"/><rect x="3" y="0" width="8" height="2" fill="#c2d6ff"/><rect x="10.3" y="0" width="0.7" height="14" fill="#6a88d0"/></svg><div class="t" style="left:25px;top:362.19px;font-size:11px;color:#e6e6e6;font-weight:400;letter-spacing:0px;">Resistor</div>
<div class="t" style="left:208px;top:362.19px;font-size:11px;color:#e6e6e6;font-weight:400;letter-spacing:0px;">Resistor</div>
<div class="t" style="left:646px;top:362.19px;font-size:11px;color:#e6e6e6;font-weight:400;letter-spacing:0px;">Resistors</div>
<svg style="left:3px;top:380px" width="14" height="14" viewBox="0 0 14 14"><rect x="0.5" y="1" width="13" height="12" fill="#1d2640" opacity="0.55"/><rect x="2.5" y="-0.5" width="9" height="15" fill="#1d2a4a" opacity="0.8"/><g fill="#d6d9e2"><rect x="0" y="2" width="3" height="1"/><rect x="0" y="5" width="3" height="1"/><rect x="0" y="8" width="3" height="1"/><rect x="0" y="11" width="3" height="1"/><rect x="11" y="2" width="3" height="1"/><rect x="11" y="5" width="3" height="1"/><rect x="11" y="8" width="3" height="1"/><rect x="11" y="11" width="3" height="1"/></g><rect x="3" y="0" width="8" height="14" fill="#7f9fe6"/><rect x="3" y="0" width="2" height="14" fill="#c2d6ff"/><rect x="3" y="0" width="8" height="2" fill="#c2d6ff"/><rect x="10.3" y="0" width="0.7" height="14" fill="#6a88d0"/></svg><div class="t" style="left:25px;top:380.19px;font-size:11px;color:#e6e6e6;font-weight:400;letter-spacing:0px;">Resistor</div>
<div class="t" style="left:208px;top:380.19px;font-size:11px;color:#e6e6e6;font-weight:400;letter-spacing:0px;">Resistor</div>
<div class="t" style="left:646px;top:380.19px;font-size:11px;color:#e6e6e6;font-weight:400;letter-spacing:0px;">Resistors</div>
<svg style="left:3px;top:398px" width="14" height="14" viewBox="0 0 14 14"><rect x="0.5" y="1" width="13" height="12" fill="#1d2640" opacity="0.55"/><rect x="2.5" y="-0.5" width="9" height="15" fill="#1d2a4a" opacity="0.8"/><g fill="#d6d9e2"><rect x="0" y="2" width="3" height="1"/><rect x="0" y="5" width="3" height="1"/><rect x="0" y="8" width="3" height="1"/><rect x="0" y="11" width="3" height="1"/><rect x="11" y="2" width="3" height="1"/><rect x="11" y="5" width="3" height="1"/><rect x="11" y="8" width="3" height="1"/><rect x="11" y="11" width="3" height="1"/></g><rect x="3" y="0" width="8" height="14" fill="#7f9fe6"/><rect x="3" y="0" width="2" height="14" fill="#c2d6ff"/><rect x="3" y="0" width="8" height="2" fill="#c2d6ff"/><rect x="10.3" y="0" width="0.7" height="14" fill="#6a88d0"/></svg><div class="t" style="left:25px;top:398.19px;font-size:11px;color:#e6e6e6;font-weight:400;letter-spacing:0px;">Resistor</div>
<div class="t" style="left:208px;top:398.19px;font-size:11px;color:#e6e6e6;font-weight:400;letter-spacing:0px;">Resistor</div>
<div class="t" style="left:646px;top:398.19px;font-size:11px;color:#e6e6e6;font-weight:400;letter-spacing:0px;">Resistors</div>
<svg style="left:3px;top:416px" width="14" height="14" viewBox="0 0 14 14"><rect x="0.5" y="1" width="13" height="12" fill="#1d2640" opacity="0.55"/><rect x="2.5" y="-0.5" width="9" height="15" fill="#1d2a4a" opacity="0.8"/><g fill="#d6d9e2"><rect x="0" y="2" width="3" height="1"/><rect x="0" y="5" width="3" height="1"/><rect x="0" y="8" width="3" height="1"/><rect x="0" y="11" width="3" height="1"/><rect x="11" y="2" width="3" height="1"/><rect x="11" y="5" width="3" height="1"/><rect x="11" y="8" width="3" height="1"/><rect x="11" y="11" width="3" height="1"/></g><rect x="3" y="0" width="8" height="14" fill="#7f9fe6"/><rect x="3" y="0" width="2" height="14" fill="#c2d6ff"/><rect x="3" y="0" width="8" height="2" fill="#c2d6ff"/><rect x="10.3" y="0" width="0.7" height="14" fill="#6a88d0"/></svg><div class="t" style="left:25px;top:416.19px;font-size:11px;color:#e6e6e6;font-weight:400;letter-spacing:0px;">Resistor</div>
<div class="t" style="left:208px;top:416.19px;font-size:11px;color:#e6e6e6;font-weight:400;letter-spacing:0px;">Resistor</div>
<div class="t" style="left:646px;top:416.19px;font-size:11px;color:#e6e6e6;font-weight:400;letter-spacing:0px;">Resistors</div>
<svg style="left:3px;top:434px" width="14" height="14" viewBox="0 0 14 14"><rect x="0.5" y="1" width="13" height="12" fill="#1d2640" opacity="0.55"/><rect x="2.5" y="-0.5" width="9" height="15" fill="#1d2a4a" opacity="0.8"/><g fill="#d6d9e2"><rect x="0" y="2" width="3" height="1"/><rect x="0" y="5" width="3" height="1"/><rect x="0" y="8" width="3" height="1"/><rect x="0" y="11" width="3" height="1"/><rect x="11" y="2" width="3" height="1"/><rect x="11" y="5" width="3" height="1"/><rect x="11" y="8" width="3" height="1"/><rect x="11" y="11" width="3" height="1"/></g><rect x="3" y="0" width="8" height="14" fill="#7f9fe6"/><rect x="3" y="0" width="2" height="14" fill="#c2d6ff"/><rect x="3" y="0" width="8" height="2" fill="#c2d6ff"/><rect x="10.3" y="0" width="0.7" height="14" fill="#6a88d0"/></svg><div class="t" style="left:25px;top:434.19px;font-size:11px;color:#e6e6e6;font-weight:400;letter-spacing:0px;">Resistor</div>
<div class="t" style="left:208px;top:434.19px;font-size:11px;color:#e6e6e6;font-weight:400;letter-spacing:0px;">Resistor</div>
<div class="t" style="left:646px;top:434.19px;font-size:11px;color:#e6e6e6;font-weight:400;letter-spacing:0px;">Resistors</div>
<svg style="left:3px;top:452px" width="14" height="14" viewBox="0 0 14 14"><rect x="0.5" y="1" width="13" height="12" fill="#1d2640" opacity="0.55"/><rect x="2.5" y="-0.5" width="9" height="15" fill="#1d2a4a" opacity="0.8"/><g fill="#d6d9e2"><rect x="0" y="2" width="3" height="1"/><rect x="0" y="5" width="3" height="1"/><rect x="0" y="8" width="3" height="1"/><rect x="0" y="11" width="3" height="1"/><rect x="11" y="2" width="3" height="1"/><rect x="11" y="5" width="3" height="1"/><rect x="11" y="8" width="3" height="1"/><rect x="11" y="11" width="3" height="1"/></g><rect x="3" y="0" width="8" height="14" fill="#7f9fe6"/><rect x="3" y="0" width="2" height="14" fill="#c2d6ff"/><rect x="3" y="0" width="8" height="2" fill="#c2d6ff"/><rect x="10.3" y="0" width="0.7" height="14" fill="#6a88d0"/></svg><div class="t" style="left:25px;top:452.19px;font-size:11px;color:#e6e6e6;font-weight:400;letter-spacing:0px;">Resistor</div>
<div class="t" style="left:208px;top:452.19px;font-size:11px;color:#e6e6e6;font-weight:400;letter-spacing:0px;">Resistor</div>
<div class="t" style="left:646px;top:452.19px;font-size:11px;color:#e6e6e6;font-weight:400;letter-spacing:0px;">Resistors</div>
<svg style="left:3px;top:470px" width="14" height="14" viewBox="0 0 14 14"><rect x="0.5" y="1" width="13" height="12" fill="#1d2640" opacity="0.55"/><rect x="2.5" y="-0.5" width="9" height="15" fill="#1d2a4a" opacity="0.8"/><g fill="#d6d9e2"><rect x="0" y="2" width="3" height="1"/><rect x="0" y="5" width="3" height="1"/><rect x="0" y="8" width="3" height="1"/><rect x="0" y="11" width="3" height="1"/><rect x="11" y="2" width="3" height="1"/><rect x="11" y="5" width="3" height="1"/><rect x="11" y="8" width="3" height="1"/><rect x="11" y="11" width="3" height="1"/></g><rect x="3" y="0" width="8" height="14" fill="#7f9fe6"/><rect x="3" y="0" width="2" height="14" fill="#c2d6ff"/><rect x="3" y="0" width="8" height="2" fill="#c2d6ff"/><rect x="10.3" y="0" width="0.7" height="14" fill="#6a88d0"/></svg><div class="t" style="left:25px;top:470.19px;font-size:11px;color:#e6e6e6;font-weight:400;letter-spacing:0px;">Resistor</div>
<div class="t" style="left:208px;top:470.19px;font-size:11px;color:#e6e6e6;font-weight:400;letter-spacing:0px;">Resistor</div>
<div class="t" style="left:646px;top:470.19px;font-size:11px;color:#e6e6e6;font-weight:400;letter-spacing:0px;">Resistors</div>
<svg style="left:3px;top:488px" width="14" height="14" viewBox="0 0 14 14"><rect x="0.5" y="1" width="13" height="12" fill="#1d2640" opacity="0.55"/><rect x="2.5" y="-0.5" width="9" height="15" fill="#1d2a4a" opacity="0.8"/><g fill="#d6d9e2"><rect x="0" y="2" width="3" height="1"/><rect x="0" y="5" width="3" height="1"/><rect x="0" y="8" width="3" height="1"/><rect x="0" y="11" width="3" height="1"/><rect x="11" y="2" width="3" height="1"/><rect x="11" y="5" width="3" height="1"/><rect x="11" y="8" width="3" height="1"/><rect x="11" y="11" width="3" height="1"/></g><rect x="3" y="0" width="8" height="14" fill="#7f9fe6"/><rect x="3" y="0" width="2" height="14" fill="#c2d6ff"/><rect x="3" y="0" width="8" height="2" fill="#c2d6ff"/><rect x="10.3" y="0" width="0.7" height="14" fill="#6a88d0"/></svg><div class="t" style="left:25px;top:488.19px;font-size:11px;color:#e6e6e6;font-weight:400;letter-spacing:0px;">Resistor</div>
<div class="t" style="left:208px;top:488.19px;font-size:11px;color:#e6e6e6;font-weight:400;letter-spacing:0px;">Resistor</div>
<div class="t" style="left:646px;top:488.19px;font-size:11px;color:#e6e6e6;font-weight:400;letter-spacing:0px;">Resistors</div>
<svg style="left:3px;top:506px" width="14" height="14" viewBox="0 0 14 14"><rect x="0.5" y="1" width="13" height="12" fill="#1d2640" opacity="0.55"/><rect x="2.5" y="-0.5" width="9" height="15" fill="#1d2a4a" opacity="0.8"/><g fill="#d6d9e2"><rect x="0" y="2" width="3" height="1"/><rect x="0" y="5" width="3" height="1"/><rect x="0" y="8" width="3" height="1"/><rect x="0" y="11" width="3" height="1"/><rect x="11" y="2" width="3" height="1"/><rect x="11" y="5" width="3" height="1"/><rect x="11" y="8" width="3" height="1"/><rect x="11" y="11" width="3" height="1"/></g><rect x="3" y="0" width="8" height="14" fill="#7f9fe6"/><rect x="3" y="0" width="2" height="14" fill="#c2d6ff"/><rect x="3" y="0" width="8" height="2" fill="#c2d6ff"/><rect x="10.3" y="0" width="0.7" height="14" fill="#6a88d0"/></svg><div class="t" style="left:25px;top:506.19px;font-size:11px;color:#e6e6e6;font-weight:400;letter-spacing:0px;">Resistor</div>
<div class="t" style="left:208px;top:506.19px;font-size:11px;color:#e6e6e6;font-weight:400;letter-spacing:0px;">Resistor</div>
<div class="t" style="left:646px;top:506.19px;font-size:11px;color:#e6e6e6;font-weight:400;letter-spacing:0px;">Resistors</div>
</div><div class="a" style="left:777px;top:114px;width:15px;height:518px;background:#3d3d3d;"></div>
<svg style="left:781px;top:119.5px" width="7" height="5" viewBox="0 0 7 5"><path d="M0 4.5H7L3.5 0.5Z" fill="#8e8e8e"/></svg><div class="a" style="left:782px;top:130px;width:6px;height:510px;background:#8a8a8a;border-radius:3px"></div>
<div class="a" style="left:9px;top:633px;width:783px;height:23px;background:#464646;"></div>
<div class="a" style="left:9px;top:632px;width:783px;height:1px;background:#262626;"></div>
<div class="t" style="left:17px;top:638.19px;font-size:11px;color:#9e9e9e;font-weight:400;letter-spacing:0px;">Results: 17</div>
<div class="a" style="left:643px;top:111px;width:72px;height:168px;border:4px solid #f27522;border-radius:11px"></div><div class="a" style="left:64px;top:672px;width:6px;height:307px;background:#3f3f3f;"></div>
<div class="a" style="left:808px;top:336px;width:136px;height:3px;background:#3a3a3a;"></div>
<div class="a" style="left:69px;top:339px;width:874px;height:639px;background:#404040;"></div>
<div class="a" style="left:69px;top:339px;width:874px;height:1px;background:#4a4a4a;"></div>
<div class="a" style="left:69px;top:339px;width:1px;height:639px;background:#4a4a4a;"></div>
<div class="a" style="left:64px;top:336px;width:879px;height:642px;background:transparent;box-shadow:4px 4px 5px 0 rgba(0,0,0,0.6)"></div>
<div class="a" style="left:951px;top:336px;width:1px;height:648px;background:#cfcfcf;"></div>
<svg style="left:90px;top:358px" width="25" height="29" viewBox="0 0 25 29"><defs><linearGradient id="cyl" x1="0" x2="1"><stop offset="0" stop-color="#c4c8cc"/><stop offset="0.3" stop-color="#e2e5e8"/><stop offset="1" stop-color="#d2d5da"/></linearGradient></defs><path d="M0.5 4 V25.5 A12 2.8 0 0 0 24 25.5 V4 Z" fill="url(#cyl)"/><ellipse cx="12.25" cy="4" rx="11.75" ry="3.4" fill="#e4e6e9" stroke="#f4f5f6" stroke-width="0.9"/><path d="M7.8 15.8 L11.3 19.4 L17.8 13.2" fill="none" stroke="#7a7f84" stroke-width="2.8"/></svg><div class="t" style="left:127px;top:364.50px;font-size:13px;color:#e4e4e4;font-weight:400;letter-spacing:0px;">Data Management – Component Types</div>
<div class="a" style="left:79px;top:408px;width:854px;height:22px;background:#4b4b4b;"></div>
<div class="t" style="left:85px;top:412.19px;font-size:11px;color:#f0f0f0;font-weight:700;letter-spacing:0px;">Component Types</div>
<div class="a" style="left:95px;top:446px;width:821px;height:21px;background:#2d2d2d;border-radius:3px;border:1px solid #2a2a2a"></div>
<svg style="left:103px;top:450px" width="12" height="12" viewBox="0 0 12 12"><circle cx="4.8" cy="4.8" r="3.6" fill="none" stroke="#a8a8a8" stroke-width="1.9"/><path d="M7.4 7.4 L10.8 10.8" stroke="#a8a8a8" stroke-width="2"/></svg><div class="t" style="left:121px;top:449.19px;font-size:11px;color:#dcdcdc;font-weight:400;letter-spacing:0px;">Search</div>
<div class="a" style="left:95px;top:479px;width:822px;height:441px;background:#3c3c3c;border:1px solid #262626"></div>
<div class="a" style="left:96px;top:480px;width:820px;height:25px;background:#484848;"></div>
<div class="a" style="left:96px;top:505px;width:820px;height:1px;background:#262626;"></div>
<div class="a" style="left:319px;top:485px;width:1px;height:14px;background:#262626;"></div>
<div class="a" style="left:608px;top:485px;width:1px;height:14px;background:#262626;"></div>
<div class="t" style="left:105px;top:486.19px;font-size:11px;color:#dcdcdc;font-weight:400;letter-spacing:0.2px;">Name</div>
<div class="t" style="left:332px;top:486.19px;font-size:11px;color:#dcdcdc;font-weight:400;letter-spacing:0.2px;">Template</div>
<div class="t" style="left:621px;top:486.19px;font-size:11px;color:#dcdcdc;font-weight:400;letter-spacing:0.3px;">Folder</div>
<div class="clip" style="left:96px;top:510px;width:802px;height:395px"><svg style="left:25px;top:-7px" width="15" height="17" viewBox="0 0 15 17"><g fill="#d0d3de"><rect x="0" y="2" width="2" height="1"/><rect x="0" y="4" width="2" height="1"/><rect x="0" y="6" width="2" height="1"/><rect x="0" y="8" width="2" height="1"/></g><rect x="1.6" y="0" width="8.4" height="11" fill="#2c3a58"/><rect x="2" y="0.8" width="7.2" height="9.8" fill="#88a8f0"/><rect x="2" y="0.8" width="1.5" height="9.8" fill="#b4ccff"/><rect x="2" y="0.8" width="7.2" height="1.3" fill="#b4ccff"/><rect x="9" y="1.2" width="5.2" height="10.2" rx="2.5" fill="#d6d6da"/><rect x="9.4" y="11" width="1.7" height="5" fill="#c6c6ca"/><rect x="12.1" y="11" width="1.7" height="5" fill="#c6c6ca"/></svg><div class="t" style="left:44px;top:-5.21px;font-size:11px;color:#e6e6e6;font-weight:400;letter-spacing:0.12px;">Capacitor-0603</div>
<svg style="left:25px;top:13px" width="15" height="17" viewBox="0 0 15 17"><g fill="#d0d3de"><rect x="0" y="2" width="2" height="1"/><rect x="0" y="4" width="2" height="1"/><rect x="0" y="6" width="2" height="1"/><rect x="0" y="8" width="2" height="1"/></g><rect x="1.6" y="0" width="8.4" height="11" fill="#2c3a58"/><rect x="2" y="0.8" width="7.2" height="9.8" fill="#88a8f0"/><rect x="2" y="0.8" width="1.5" height="9.8" fill="#b4ccff"/><rect x="2" y="0.8" width="7.2" height="1.3" fill="#b4ccff"/><rect x="9" y="1.2" width="5.2" height="10.2" rx="2.5" fill="#d6d6da"/><rect x="9.4" y="11" width="1.7" height="5" fill="#c6c6ca"/><rect x="12.1" y="11" width="1.7" height="5" fill="#c6c6ca"/></svg><div class="t" style="left:44px;top:14.79px;font-size:11px;color:#e6e6e6;font-weight:400;letter-spacing:0.12px;">Capacitor-0805</div>
<svg style="left:25px;top:33px" width="15" height="17" viewBox="0 0 15 17"><g fill="#d0d3de"><rect x="0" y="2" width="2" height="1"/><rect x="0" y="4" width="2" height="1"/><rect x="0" y="6" width="2" height="1"/><rect x="0" y="8" width="2" height="1"/></g><rect x="1.6" y="0" width="8.4" height="11" fill="#2c3a58"/><rect x="2" y="0.8" width="7.2" height="9.8" fill="#88a8f0"/><rect x="2" y="0.8" width="1.5" height="9.8" fill="#b4ccff"/><rect x="2" y="0.8" width="7.2" height="1.3" fill="#b4ccff"/><rect x="9" y="1.2" width="5.2" height="10.2" rx="2.5" fill="#d6d6da"/><rect x="9.4" y="11" width="1.7" height="5" fill="#c6c6ca"/><rect x="12.1" y="11" width="1.7" height="5" fill="#c6c6ca"/></svg><div class="t" style="left:44px;top:34.79px;font-size:11px;color:#e6e6e6;font-weight:400;letter-spacing:0.12px;">Capacitors</div>
<div class="t" style="left:164px;top:34.79px;font-size:11px;color:#e6e6e6;font-weight:400;letter-spacing:0.12px;">Capacitors</div>
<div class="t" style="left:446px;top:34.79px;font-size:11px;color:#e6e6e6;font-weight:400;letter-spacing:0.3px;">Components\Capacitors</div>
<svg style="left:25px;top:53px" width="15" height="17" viewBox="0 0 15 17"><g fill="#d0d3de"><rect x="0" y="2" width="2" height="1"/><rect x="0" y="4" width="2" height="1"/><rect x="0" y="6" width="2" height="1"/><rect x="0" y="8" width="2" height="1"/></g><rect x="1.6" y="0" width="8.4" height="11" fill="#2c3a58"/><rect x="2" y="0.8" width="7.2" height="9.8" fill="#88a8f0"/><rect x="2" y="0.8" width="1.5" height="9.8" fill="#b4ccff"/><rect x="2" y="0.8" width="7.2" height="1.3" fill="#b4ccff"/><rect x="9" y="1.2" width="5.2" height="10.2" rx="2.5" fill="#d6d6da"/><rect x="9.4" y="11" width="1.7" height="5" fill="#c6c6ca"/><rect x="12.1" y="11" width="1.7" height="5" fill="#c6c6ca"/></svg><div class="t" style="left:44px;top:54.79px;font-size:11px;color:#e6e6e6;font-weight:400;letter-spacing:0.12px;">Connectors</div>
<div class="t" style="left:164px;top:54.79px;font-size:11px;color:#e6e6e6;font-weight:400;letter-spacing:0.12px;">Connectors</div>
<div class="t" style="left:446px;top:54.79px;font-size:11px;color:#e6e6e6;font-weight:400;letter-spacing:0.3px;">Components\Connectors</div>
<svg style="left:25px;top:73px" width="15" height="17" viewBox="0 0 15 17"><g fill="#d0d3de"><rect x="0" y="2" width="2" height="1"/><rect x="0" y="4" width="2" height="1"/><rect x="0" y="6" width="2" height="1"/><rect x="0" y="8" width="2" height="1"/></g><rect x="1.6" y="0" width="8.4" height="11" fill="#2c3a58"/><rect x="2" y="0.8" width="7.2" height="9.8" fill="#88a8f0"/><rect x="2" y="0.8" width="1.5" height="9.8" fill="#b4ccff"/><rect x="2" y="0.8" width="7.2" height="1.3" fill="#b4ccff"/><rect x="9" y="1.2" width="5.2" height="10.2" rx="2.5" fill="#d6d6da"/><rect x="9.4" y="11" width="1.7" height="5" fill="#c6c6ca"/><rect x="12.1" y="11" width="1.7" height="5" fill="#c6c6ca"/></svg><div class="t" style="left:44px;top:74.79px;font-size:11px;color:#e6e6e6;font-weight:400;letter-spacing:0.12px;">Crystals &amp; Oscillators</div>
<div class="t" style="left:164px;top:74.79px;font-size:11px;color:#e6e6e6;font-weight:400;letter-spacing:0.12px;">Crystals &amp; Oscillators</div>
<div class="t" style="left:446px;top:74.79px;font-size:11px;color:#e6e6e6;font-weight:400;letter-spacing:0.3px;">Components\Crystals&amp;Oscillators</div>
<svg style="left:25px;top:93px" width="15" height="17" viewBox="0 0 15 17"><g fill="#d0d3de"><rect x="0" y="2" width="2" height="1"/><rect x="0" y="4" width="2" height="1"/><rect x="0" y="6" width="2" height="1"/><rect x="0" y="8" width="2" height="1"/></g><rect x="1.6" y="0" width="8.4" height="11" fill="#2c3a58"/><rect x="2" y="0.8" width="7.2" height="9.8" fill="#88a8f0"/><rect x="2" y="0.8" width="1.5" height="9.8" fill="#b4ccff"/><rect x="2" y="0.8" width="7.2" height="1.3" fill="#b4ccff"/><rect x="9" y="1.2" width="5.2" height="10.2" rx="2.5" fill="#d6d6da"/><rect x="9.4" y="11" width="1.7" height="5" fill="#c6c6ca"/><rect x="12.1" y="11" width="1.7" height="5" fill="#c6c6ca"/></svg><div class="t" style="left:44px;top:94.79px;font-size:11px;color:#e6e6e6;font-weight:400;letter-spacing:0.12px;">Diodes</div>
<div class="t" style="left:164px;top:94.79px;font-size:11px;color:#e6e6e6;font-weight:400;letter-spacing:0.12px;">Diodes</div>
<div class="t" style="left:446px;top:94.79px;font-size:11px;color:#e6e6e6;font-weight:400;letter-spacing:0.3px;">Components\Diodes</div>
<svg style="left:25px;top:113px" width="15" height="17" viewBox="0 0 15 17"><g fill="#d0d3de"><rect x="0" y="2" width="2" height="1"/><rect x="0" y="4" width="2" height="1"/><rect x="0" y="6" width="2" height="1"/><rect x="0" y="8" width="2" height="1"/></g><rect x="1.6" y="0" width="8.4" height="11" fill="#2c3a58"/><rect x="2" y="0.8" width="7.2" height="9.8" fill="#88a8f0"/><rect x="2" y="0.8" width="1.5" height="9.8" fill="#b4ccff"/><rect x="2" y="0.8" width="7.2" height="1.3" fill="#b4ccff"/><rect x="9" y="1.2" width="5.2" height="10.2" rx="2.5" fill="#d6d6da"/><rect x="9.4" y="11" width="1.7" height="5" fill="#c6c6ca"/><rect x="12.1" y="11" width="1.7" height="5" fill="#c6c6ca"/></svg><div class="t" style="left:44px;top:114.79px;font-size:11px;color:#e6e6e6;font-weight:400;letter-spacing:0.12px;">Fuses</div>
<div class="t" style="left:164px;top:114.79px;font-size:11px;color:#e6e6e6;font-weight:400;letter-spacing:0.12px;">Fuses</div>
<div class="t" style="left:446px;top:114.79px;font-size:11px;color:#e6e6e6;font-weight:400;letter-spacing:0.3px;">Components\Fuses</div>
<svg style="left:25px;top:133px" width="15" height="17" viewBox="0 0 15 17"><g fill="#d0d3de"><rect x="0" y="2" width="2" height="1"/><rect x="0" y="4" width="2" height="1"/><rect x="0" y="6" width="2" height="1"/><rect x="0" y="8" width="2" height="1"/></g><rect x="1.6" y="0" width="8.4" height="11" fill="#2c3a58"/><rect x="2" y="0.8" width="7.2" height="9.8" fill="#88a8f0"/><rect x="2" y="0.8" width="1.5" height="9.8" fill="#b4ccff"/><rect x="2" y="0.8" width="7.2" height="1.3" fill="#b4ccff"/><rect x="9" y="1.2" width="5.2" height="10.2" rx="2.5" fill="#d6d6da"/><rect x="9.4" y="11" width="1.7" height="5" fill="#c6c6ca"/><rect x="12.1" y="11" width="1.7" height="5" fill="#c6c6ca"/></svg><div class="t" style="left:44px;top:134.79px;font-size:11px;color:#e6e6e6;font-weight:400;letter-spacing:0.12px;">Inductors</div>
<div class="t" style="left:164px;top:134.79px;font-size:11px;color:#e6e6e6;font-weight:400;letter-spacing:0.12px;">Inductors</div>
<div class="t" style="left:446px;top:134.79px;font-size:11px;color:#e6e6e6;font-weight:400;letter-spacing:0.3px;">Components\Inductors</div>
<svg style="left:25px;top:153px" width="15" height="17" viewBox="0 0 15 17"><g fill="#d0d3de"><rect x="0" y="2" width="2" height="1"/><rect x="0" y="4" width="2" height="1"/><rect x="0" y="6" width="2" height="1"/><rect x="0" y="8" width="2" height="1"/></g><rect x="1.6" y="0" width="8.4" height="11" fill="#2c3a58"/><rect x="2" y="0.8" width="7.2" height="9.8" fill="#88a8f0"/><rect x="2" y="0.8" width="1.5" height="9.8" fill="#b4ccff"/><rect x="2" y="0.8" width="7.2" height="1.3" fill="#b4ccff"/><rect x="9" y="1.2" width="5.2" height="10.2" rx="2.5" fill="#d6d6da"/><rect x="9.4" y="11" width="1.7" height="5" fill="#c6c6ca"/><rect x="12.1" y="11" width="1.7" height="5" fill="#c6c6ca"/></svg><div class="t" style="left:44px;top:154.79px;font-size:11px;color:#e6e6e6;font-weight:400;letter-spacing:0.12px;">Integrated Circuits</div>
<div class="t" style="left:164px;top:154.79px;font-size:11px;color:#e6e6e6;font-weight:400;letter-spacing:0.12px;">Integrated Circuits</div>
<div class="t" style="left:446px;top:154.79px;font-size:11px;color:#e6e6e6;font-weight:400;letter-spacing:0.3px;">Components\Integrated Circuits</div>
<svg style="left:9px;top:157.5px" width="5" height="8" viewBox="0 0 5 8"><path d="M0.5 0.5V7.5L4.5 4Z" fill="#e0e0e0"/></svg><svg style="left:25px;top:173px" width="15" height="17" viewBox="0 0 15 17"><g fill="#d0d3de"><rect x="0" y="2" width="2" height="1"/><rect x="0" y="4" width="2" height="1"/><rect x="0" y="6" width="2" height="1"/><rect x="0" y="8" width="2" height="1"/></g><rect x="1.6" y="0" width="8.4" height="11" fill="#2c3a58"/><rect x="2" y="0.8" width="7.2" height="9.8" fill="#88a8f0"/><rect x="2" y="0.8" width="1.5" height="9.8" fill="#b4ccff"/><rect x="2" y="0.8" width="7.2" height="1.3" fill="#b4ccff"/><rect x="9" y="1.2" width="5.2" height="10.2" rx="2.5" fill="#d6d6da"/><rect x="9.4" y="11" width="1.7" height="5" fill="#c6c6ca"/><rect x="12.1" y="11" width="1.7" height="5" fill="#c6c6ca"/></svg><div class="t" style="left:44px;top:174.79px;font-size:11px;color:#e6e6e6;font-weight:400;letter-spacing:0.12px;">LED</div>
<div class="t" style="left:164px;top:174.79px;font-size:11px;color:#e6e6e6;font-weight:400;letter-spacing:0.12px;">LED</div>
<div class="t" style="left:446px;top:174.79px;font-size:11px;color:#e6e6e6;font-weight:400;letter-spacing:0.3px;">Components\Diodes\LED</div>
<svg style="left:25px;top:193px" width="15" height="17" viewBox="0 0 15 17"><g fill="#d0d3de"><rect x="0" y="2" width="2" height="1"/><rect x="0" y="4" width="2" height="1"/><rect x="0" y="6" width="2" height="1"/><rect x="0" y="8" width="2" height="1"/></g><rect x="1.6" y="0" width="8.4" height="11" fill="#2c3a58"/><rect x="2" y="0.8" width="7.2" height="9.8" fill="#88a8f0"/><rect x="2" y="0.8" width="1.5" height="9.8" fill="#b4ccff"/><rect x="2" y="0.8" width="7.2" height="1.3" fill="#b4ccff"/><rect x="9" y="1.2" width="5.2" height="10.2" rx="2.5" fill="#d6d6da"/><rect x="9.4" y="11" width="1.7" height="5" fill="#c6c6ca"/><rect x="12.1" y="11" width="1.7" height="5" fill="#c6c6ca"/></svg><div class="t" style="left:44px;top:194.79px;font-size:11px;color:#e6e6e6;font-weight:400;letter-spacing:0.12px;">Mechanical</div>
<div class="t" style="left:164px;top:194.79px;font-size:11px;color:#e6e6e6;font-weight:400;letter-spacing:0.12px;">Mechanical</div>
<div class="t" style="left:446px;top:194.79px;font-size:11px;color:#e6e6e6;font-weight:400;letter-spacing:0.3px;">Components\Mechanical</div>
<svg style="left:25px;top:213px" width="15" height="17" viewBox="0 0 15 17"><g fill="#d0d3de"><rect x="0" y="2" width="2" height="1"/><rect x="0" y="4" width="2" height="1"/><rect x="0" y="6" width="2" height="1"/><rect x="0" y="8" width="2" height="1"/></g><rect x="1.6" y="0" width="8.4" height="11" fill="#2c3a58"/><rect x="2" y="0.8" width="7.2" height="9.8" fill="#88a8f0"/><rect x="2" y="0.8" width="1.5" height="9.8" fill="#b4ccff"/><rect x="2" y="0.8" width="7.2" height="1.3" fill="#b4ccff"/><rect x="9" y="1.2" width="5.2" height="10.2" rx="2.5" fill="#d6d6da"/><rect x="9.4" y="11" width="1.7" height="5" fill="#c6c6ca"/><rect x="12.1" y="11" width="1.7" height="5" fill="#c6c6ca"/></svg><div class="t" style="left:44px;top:214.79px;font-size:11px;color:#e6e6e6;font-weight:400;letter-spacing:0.12px;">Miscellaneous</div>
<div class="t" style="left:164px;top:214.79px;font-size:11px;color:#e6e6e6;font-weight:400;letter-spacing:0.12px;">Miscellaneous</div>
<div class="t" style="left:446px;top:214.79px;font-size:11px;color:#e6e6e6;font-weight:400;letter-spacing:0.3px;">Components\Miscellaneous</div>
<svg style="left:25px;top:233px" width="15" height="17" viewBox="0 0 15 17"><g fill="#d0d3de"><rect x="0" y="2" width="2" height="1"/><rect x="0" y="4" width="2" height="1"/><rect x="0" y="6" width="2" height="1"/><rect x="0" y="8" width="2" height="1"/></g><rect x="1.6" y="0" width="8.4" height="11" fill="#2c3a58"/><rect x="2" y="0.8" width="7.2" height="9.8" fill="#88a8f0"/><rect x="2" y="0.8" width="1.5" height="9.8" fill="#b4ccff"/><rect x="2" y="0.8" width="7.2" height="1.3" fill="#b4ccff"/><rect x="9" y="1.2" width="5.2" height="10.2" rx="2.5" fill="#d6d6da"/><rect x="9.4" y="11" width="1.7" height="5" fill="#c6c6ca"/><rect x="12.1" y="11" width="1.7" height="5" fill="#c6c6ca"/></svg><div class="t" style="left:44px;top:234.79px;font-size:11px;color:#e6e6e6;font-weight:400;letter-spacing:0.12px;">Optoelectronics</div>
<div class="t" style="left:164px;top:234.79px;font-size:11px;color:#e6e6e6;font-weight:400;letter-spacing:0.12px;">Optoelectronics</div>
<div class="t" style="left:446px;top:234.79px;font-size:11px;color:#e6e6e6;font-weight:400;letter-spacing:0.3px;">Components\Optoelectronics</div>
<svg style="left:25px;top:253px" width="15" height="17" viewBox="0 0 15 17"><g fill="#d0d3de"><rect x="0" y="2" width="2" height="1"/><rect x="0" y="4" width="2" height="1"/><rect x="0" y="6" width="2" height="1"/><rect x="0" y="8" width="2" height="1"/></g><rect x="1.6" y="0" width="8.4" height="11" fill="#2c3a58"/><rect x="2" y="0.8" width="7.2" height="9.8" fill="#88a8f0"/><rect x="2" y="0.8" width="1.5" height="9.8" fill="#b4ccff"/><rect x="2" y="0.8" width="7.2" height="1.3" fill="#b4ccff"/><rect x="9" y="1.2" width="5.2" height="10.2" rx="2.5" fill="#d6d6da"/><rect x="9.4" y="11" width="1.7" height="5" fill="#c6c6ca"/><rect x="12.1" y="11" width="1.7" height="5" fill="#c6c6ca"/></svg><div class="t" style="left:44px;top:254.79px;font-size:11px;color:#e6e6e6;font-weight:400;letter-spacing:0.12px;">Radio&amp;RF</div>
<div class="t" style="left:164px;top:254.79px;font-size:11px;color:#e6e6e6;font-weight:400;letter-spacing:0.12px;">Radio&amp;RF</div>
<div class="t" style="left:446px;top:254.79px;font-size:11px;color:#e6e6e6;font-weight:400;letter-spacing:0.3px;">Components\Radio&amp;RF</div>
<svg style="left:25px;top:273px" width="15" height="17" viewBox="0 0 15 17"><g fill="#d0d3de"><rect x="0" y="2" width="2" height="1"/><rect x="0" y="4" width="2" height="1"/><rect x="0" y="6" width="2" height="1"/><rect x="0" y="8" width="2" height="1"/></g><rect x="1.6" y="0" width="8.4" height="11" fill="#2c3a58"/><rect x="2" y="0.8" width="7.2" height="9.8" fill="#88a8f0"/><rect x="2" y="0.8" width="1.5" height="9.8" fill="#b4ccff"/><rect x="2" y="0.8" width="7.2" height="1.3" fill="#b4ccff"/><rect x="9" y="1.2" width="5.2" height="10.2" rx="2.5" fill="#d6d6da"/><rect x="9.4" y="11" width="1.7" height="5" fill="#c6c6ca"/><rect x="12.1" y="11" width="1.7" height="5" fill="#c6c6ca"/></svg><div class="t" style="left:44px;top:274.79px;font-size:11px;color:#e6e6e6;font-weight:400;letter-spacing:0.12px;">Relays</div>
<div class="t" style="left:164px;top:274.79px;font-size:11px;color:#e6e6e6;font-weight:400;letter-spacing:0.12px;">Relays</div>
<div class="t" style="left:446px;top:274.79px;font-size:11px;color:#e6e6e6;font-weight:400;letter-spacing:0.3px;">Components\Relays</div>
<div class="a" style="left:23px;top:291px;width:779px;height:20px;background:#5a7ea5;"></div>
<svg style="left:25px;top:293px" width="15" height="17" viewBox="0 0 15 17"><g fill="#d0d3de"><rect x="0" y="2" width="2" height="1"/><rect x="0" y="4" width="2" height="1"/><rect x="0" y="6" width="2" height="1"/><rect x="0" y="8" width="2" height="1"/></g><rect x="1.6" y="0" width="8.4" height="11" fill="#2c3a58"/><rect x="2" y="0.8" width="7.2" height="9.8" fill="#88a8f0"/><rect x="2" y="0.8" width="1.5" height="9.8" fill="#b4ccff"/><rect x="2" y="0.8" width="7.2" height="1.3" fill="#b4ccff"/><rect x="9" y="1.2" width="5.2" height="10.2" rx="2.5" fill="#d6d6da"/><rect x="9.4" y="11" width="1.7" height="5" fill="#c6c6ca"/><rect x="12.1" y="11" width="1.7" height="5" fill="#c6c6ca"/></svg><div class="t" style="left:44px;top:294.79px;font-size:11px;color:#d6dde6;font-weight:400;letter-spacing:0.12px;">Resistors</div>
<div class="t" style="left:164px;top:294.79px;font-size:11px;color:#d6dde6;font-weight:400;letter-spacing:-0.06px;">Resistors,Resistor_0402,Resistor_0603,Resistor_0805</div>
<div class="t" style="left:446px;top:294.79px;font-size:11px;color:#d6dde6;font-weight:400;letter-spacing:0.3px;">*</div>
<svg style="left:25px;top:313px" width="15" height="17" viewBox="0 0 15 17"><g fill="#d0d3de"><rect x="0" y="2" width="2" height="1"/><rect x="0" y="4" width="2" height="1"/><rect x="0" y="6" width="2" height="1"/><rect x="0" y="8" width="2" height="1"/></g><rect x="1.6" y="0" width="8.4" height="11" fill="#2c3a58"/><rect x="2" y="0.8" width="7.2" height="9.8" fill="#88a8f0"/><rect x="2" y="0.8" width="1.5" height="9.8" fill="#b4ccff"/><rect x="2" y="0.8" width="7.2" height="1.3" fill="#b4ccff"/><rect x="9" y="1.2" width="5.2" height="10.2" rx="2.5" fill="#d6d6da"/><rect x="9.4" y="11" width="1.7" height="5" fill="#c6c6ca"/><rect x="12.1" y="11" width="1.7" height="5" fill="#c6c6ca"/></svg><div class="t" style="left:44px;top:314.79px;font-size:11px;color:#e6e6e6;font-weight:400;letter-spacing:0.12px;">Sensors</div>
<div class="t" style="left:164px;top:314.79px;font-size:11px;color:#e6e6e6;font-weight:400;letter-spacing:0.12px;">Sensors</div>
<div class="t" style="left:446px;top:314.79px;font-size:11px;color:#e6e6e6;font-weight:400;letter-spacing:0.3px;">Components\Sensors</div>
<svg style="left:25px;top:333px" width="15" height="17" viewBox="0 0 15 17"><g fill="#d0d3de"><rect x="0" y="2" width="2" height="1"/><rect x="0" y="4" width="2" height="1"/><rect x="0" y="6" width="2" height="1"/><rect x="0" y="8" width="2" height="1"/></g><rect x="1.6" y="0" width="8.4" height="11" fill="#2c3a58"/><rect x="2" y="0.8" width="7.2" height="9.8" fill="#88a8f0"/><rect x="2" y="0.8" width="1.5" height="9.8" fill="#b4ccff"/><rect x="2" y="0.8" width="7.2" height="1.3" fill="#b4ccff"/><rect x="9" y="1.2" width="5.2" height="10.2" rx="2.5" fill="#d6d6da"/><rect x="9.4" y="11" width="1.7" height="5" fill="#c6c6ca"/><rect x="12.1" y="11" width="1.7" height="5" fill="#c6c6ca"/></svg><div class="t" style="left:44px;top:334.79px;font-size:11px;color:#e6e6e6;font-weight:400;letter-spacing:0.12px;">Switches</div>
<div class="t" style="left:164px;top:334.79px;font-size:11px;color:#e6e6e6;font-weight:400;letter-spacing:0.12px;">Switches</div>
<div class="t" style="left:446px;top:334.79px;font-size:11px;color:#e6e6e6;font-weight:400;letter-spacing:0.3px;">Components\Switches</div>
<svg style="left:25px;top:353px" width="15" height="17" viewBox="0 0 15 17"><g fill="#d0d3de"><rect x="0" y="2" width="2" height="1"/><rect x="0" y="4" width="2" height="1"/><rect x="0" y="6" width="2" height="1"/><rect x="0" y="8" width="2" height="1"/></g><rect x="1.6" y="0" width="8.4" height="11" fill="#2c3a58"/><rect x="2" y="0.8" width="7.2" height="9.8" fill="#88a8f0"/><rect x="2" y="0.8" width="1.5" height="9.8" fill="#b4ccff"/><rect x="2" y="0.8" width="7.2" height="1.3" fill="#b4ccff"/><rect x="9" y="1.2" width="5.2" height="10.2" rx="2.5" fill="#d6d6da"/><rect x="9.4" y="11" width="1.7" height="5" fill="#c6c6ca"/><rect x="12.1" y="11" width="1.7" height="5" fill="#c6c6ca"/></svg><div class="t" style="left:44px;top:354.79px;font-size:11px;color:#e6e6e6;font-weight:400;letter-spacing:0.12px;">Transformers</div>
<div class="t" style="left:164px;top:354.79px;font-size:11px;color:#e6e6e6;font-weight:400;letter-spacing:0.12px;">Transformers</div>
<div class="t" style="left:446px;top:354.79px;font-size:11px;color:#e6e6e6;font-weight:400;letter-spacing:0.3px;">Components\Transformers</div>
<svg style="left:25px;top:373px" width="15" height="17" viewBox="0 0 15 17"><g fill="#d0d3de"><rect x="0" y="2" width="2" height="1"/><rect x="0" y="4" width="2" height="1"/><rect x="0" y="6" width="2" height="1"/><rect x="0" y="8" width="2" height="1"/></g><rect x="1.6" y="0" width="8.4" height="11" fill="#2c3a58"/><rect x="2" y="0.8" width="7.2" height="9.8" fill="#88a8f0"/><rect x="2" y="0.8" width="1.5" height="9.8" fill="#b4ccff"/><rect x="2" y="0.8" width="7.2" height="1.3" fill="#b4ccff"/><rect x="9" y="1.2" width="5.2" height="10.2" rx="2.5" fill="#d6d6da"/><rect x="9.4" y="11" width="1.7" height="5" fill="#c6c6ca"/><rect x="12.1" y="11" width="1.7" height="5" fill="#c6c6ca"/></svg><div class="t" style="left:44px;top:374.79px;font-size:11px;color:#e6e6e6;font-weight:400;letter-spacing:0.12px;">Transistors</div>
<div class="t" style="left:164px;top:374.79px;font-size:11px;color:#e6e6e6;font-weight:400;letter-spacing:0.12px;">Transistors</div>
<div class="t" style="left:446px;top:374.79px;font-size:11px;color:#e6e6e6;font-weight:400;letter-spacing:0.3px;">Components\Transistors</div>
</div><svg style="left:904px;top:514px" width="7" height="4" viewBox="0 0 7 4"><path d="M0 4H7L3.5 0.5Z" fill="#9a9a9a"/></svg><div class="a" style="left:904px;top:578px;width:6px;height:308px;background:#8c8c8c;border-radius:3px"></div>
<svg style="left:904px;top:892px" width="7" height="4" viewBox="0 0 7 4"><path d="M0 0H7L3.5 3.5Z" fill="#9a9a9a"/></svg><svg style="left:105px;top:907px" width="4" height="7" viewBox="0 0 4 7"><path d="M4 0V7L0.5 3.5Z" fill="#9a9a9a"/></svg><div class="a" style="left:115px;top:906px;width:684px;height:7px;background:#8c8c8c;border-radius:3.5px"></div>
<svg style="left:890px;top:907px" width="4" height="7" viewBox="0 0 4 7"><path d="M0 0V7L3.5 3.5Z" fill="#9a9a9a"/></svg><div class="btn" style="left:95px;top:928px;width:75px;height:25px"></div><div class="t" style="left:107px;top:934.19px;font-size:11px;color:#e6e6e6;font-weight:400;letter-spacing:0px;">Templates</div>
<div class="btn" style="left:756px;top:928px;width:74px;height:25px"></div><div class="a" style="left:814px;top:929px;width:1px;height:23px;background:#262626;"></div>
<div class="t" style="left:775px;top:934.19px;font-size:11px;color:#e6e6e6;font-weight:400;letter-spacing:0.4px;">Add</div>
<svg style="left:817px;top:939px" width="8" height="5" viewBox="0 0 8 5"><path d="M0 0H8L4 4.5Z" fill="#fff"/></svg><div class="btn" style="left:842px;top:928px;width:75px;height:25px"></div><div class="t" style="left:861px;top:934.19px;font-size:11px;color:#e6e6e6;font-weight:400;letter-spacing:0px;">Remove</div>
<div class="a" style="left:951px;top:824px;width:144px;height:1px;background:#d4d4d4;"></div>
<div class="a" style="left:951px;top:854px;width:138px;height:1px;background:#d4d4d4;"></div>
<div class="a" style="left:1086px;top:824px;width:9px;height:31px;border:1px solid #dcdcdc;border-left:none;border-radius:0 6px 6px 0"></div><svg style="left:544px;top:811px" width="13" height="20" viewBox="0 0 13 20"><path d="M0.5 0.5 V16.5 L4.3 12.8 L7 18.8 L9.3 17.8 L6.7 12 H11.8 Z" fill="#fff" stroke="#111" stroke-width="1"/></svg><div class="a" style="left:548px;top:826px;width:540px;height:20px;background:#ededed;border:1px solid #767676;border-left-color:#e8e8e8;border-bottom-color:#9a9a9a;box-shadow:3px 4px 5px rgba(0,0,0,0.5)"></div>
<div class="t" style="left:554px;top:828.79px;font-size:11px;color:#2a2a2a;font-weight:400;letter-spacing:0.19px;">Components\Resistors,Components\Resistor0402,Components\Resistor0603,Components\Resistor0805</div>
</body></html>
